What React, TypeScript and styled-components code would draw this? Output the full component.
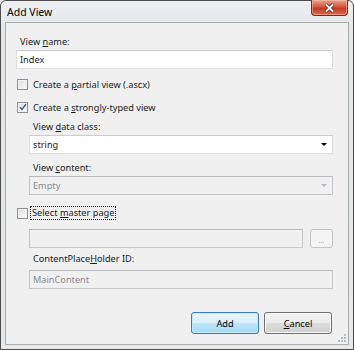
import React from "react";
import styled, { createGlobalStyle } from "styled-components";

const GlobalStyle = createGlobalStyle`
  html, body {
    margin: 0;
    padding: 0;
    background: #ffffff;
  }
  body {
    font-family: "Noto Sans", "Liberation Sans", sans-serif;
    font-size: 9.2px;
    color: #1b1b1b;
  }
`;

const Window = styled.div`
  width: 354px;
  height: 350px;
  box-sizing: border-box;
  display: flex;
  flex-direction: column;
  border: 1px solid #4d4d4d;
  border-radius: 6px 6px 0 0;
  padding: 0 4px 4px 4px;
  background: linear-gradient(180deg, #eef0f2 0%, #e3e6ea 30px, #e6e8eb 100%);
`;

const TitleBar = styled.div`
  height: 21px;
  display: flex;
  align-items: flex-start;
  justify-content: space-between;
`;

const Title = styled.span`
  font-size: 10.5px;
  color: #000;
  padding: 4px 0 0 2px;
`;

const CloseButton = styled.div`
  width: 37px;
  height: 16px;
  margin-top: -1px;
  margin-right: 1px;
  box-sizing: border-box;
  border: 1px solid #7d2a1d;
  border-top: none;
  border-radius: 0 0 4px 4px;
  box-shadow: inset 0 0 0 1px rgba(255, 200, 180, 0.5);
  background: linear-gradient(180deg, #e8a390 0%, #d4583f 45%, #c23b22 55%, #d66b50 100%);
  display: flex;
  align-items: center;
  justify-content: center;
`;

const Client = styled.div`
  flex: 1;
  display: flex;
  flex-direction: column;
  border: 1px solid #a9abae;
  background: #f0f0f0;
  padding: 12px 15px 0 10px;
  position: relative;
`;

const Label = styled.div<{ $mt?: number; $indent?: number }>`
  height: 14px;
  line-height: 14px;
  margin-top: ${(p) => p.$mt ?? 0}px;
  padding-left: ${(p) => (p.$indent ?? 0) + 4}px;
  white-space: nowrap;
`;

const Key = styled.span`
  text-decoration: underline;
  text-underline-offset: 1px;
`;

const TextBox = styled.div<{ $mt?: number; $indent?: number; $disabled?: boolean; $grow?: boolean }>`
  height: 19px;
  box-sizing: border-box;
  margin-top: ${(p) => p.$mt ?? 0}px;
  margin-left: ${(p) => p.$indent ?? 0}px;
  border: 1px solid ${(p) => (p.$disabled ? "#c3c5c8" : "#dcdfe3")};
  border-top-color: ${(p) => (p.$disabled ? "#b9bbbe" : "#c9cdd2")};
  background: ${(p) => (p.$disabled ? "#f0f0f0" : "#ffffff")};
  color: ${(p) => (p.$disabled ? "#8a8a8a" : "#1b1b1b")};
  padding: 0 3px;
  line-height: 17px;
  display: flex;
  align-items: center;
  justify-content: space-between;
  flex: ${(p) => (p.$grow ? 1 : "none")};
`;

const Arrow = styled.span<{ $disabled?: boolean }>`
  width: 0;
  height: 0;
  margin-right: 2px;
  border-left: 3px solid transparent;
  border-right: 3px solid transparent;
  border-top: 3px solid ${(p) => (p.$disabled ? "#b5b5b5" : "#000")};
`;

const CheckRow = styled.label<{ $mt?: number }>`
  display: flex;
  align-items: center;
  gap: 5px;
  height: 14px;
  margin-top: ${(p) => p.$mt ?? 0}px;
  padding-left: 1px;
  white-space: nowrap;
`;

const Box = styled.span`
  width: 11px;
  height: 11px;
  box-sizing: border-box;
  border: 1px solid #8e8f8f;
  background: linear-gradient(135deg, #dcdcdc 0%, #f0f0f0 60%, #fbfbfb 100%);
  box-shadow: inset 0 0 0 1px #f4f4f4;
  display: flex;
  align-items: center;
  justify-content: center;
`;

const Focus = styled.span`
  outline: 1px dotted #222;
  padding: 0 1px;
  margin-left: -2px;
  line-height: 12px;
`;

const Row = styled.div<{ $mt?: number; $indent?: number }>`
  display: flex;
  gap: 7px;
  margin-top: ${(p) => p.$mt ?? 0}px;
  margin-left: ${(p) => p.$indent ?? 0}px;
`;

const SmallButton = styled.div`
  width: 23px;
  height: 19px;
  box-sizing: border-box;
  border: 1px solid #c2c4c7;
  border-radius: 3px;
  background: #f4f4f4;
  color: #a0a0a0;
  font-size: 7px;
  display: flex;
  align-items: center;
  justify-content: center;
  padding-top: 3px;
`;

const Buttons = styled.div`
  display: flex;
  justify-content: flex-end;
  gap: 5px;
  margin-top: 23px;
  margin-right: 1px;
`;

const Button = styled.div<{ $default?: boolean }>`
  width: 68px;
  height: 22px;
  box-sizing: border-box;
  border-radius: 3px;
  border: 1px solid ${(p) => (p.$default ? "#3c7fb1" : "#707070")};
  box-shadow: inset 0 0 0 1px ${(p) => (p.$default ? "#c2e8fc" : "#fbfbfb")};
  background: ${(p) =>
    p.$default
      ? "linear-gradient(180deg, #eaf6fd 0%, #d9f0fc 50%, #bee6fd 51%, #a7d9f5 100%)"
      : "linear-gradient(180deg, #f2f2f2 0%, #ebebeb 50%, #dddddd 51%, #cfcfcf 100%)"};
  display: flex;
  align-items: center;
  justify-content: center;
  color: #000;
`;

const Grip = styled.svg`
  position: absolute;
  right: 1px;
  bottom: 1px;
`;

export default function App() {
  return (
    <>
      <GlobalStyle />
      <Window>
        <TitleBar>
          <Title>Add View</Title>
          <CloseButton>
            <svg width="11" height="10" viewBox="0 0 11 10">
              <path d="M2 1.5 L9 8.5 M9 1.5 L2 8.5" stroke="#5a1a10" strokeWidth="3.2" />
              <path d="M2 1.5 L9 8.5 M9 1.5 L2 8.5" stroke="#ffffff" strokeWidth="1.8" />
            </svg>
          </CloseButton>
        </TitleBar>
        <Client>
          <Label>
            View <Key>n</Key>ame:
          </Label>
          <TextBox $mt={1}>Index</TextBox>

          <CheckRow $mt={8}>
            <Box />
            <span>
              Create a <Key>p</Key>artial view (.ascx)
            </span>
          </CheckRow>
          <CheckRow $mt={9}>
            <Box>
              <svg width="8" height="8" viewBox="0 0 8 8">
                <path d="M1 4.2 L3 6.5 L7 1" fill="none" stroke="#3d5a8c" strokeWidth="1.4" />
              </svg>
            </Box>
            <span>
              Create a <Key>s</Key>trongly-typed view
            </span>
          </CheckRow>

          <Label $mt={6} $indent={13}>
            View <Key>d</Key>ata class:
          </Label>
          <TextBox $mt={1} $indent={13}>
            <span>string</span>
            <Arrow />
          </TextBox>
          <Label $mt={7} $indent={13}>
            View <Key>c</Key>ontent:
          </Label>
          <TextBox $mt={1} $indent={13} $disabled>
            <span>Empty</span>
            <Arrow $disabled />
          </TextBox>

          <CheckRow $mt={11}>
            <Box />
            <Focus>
              Select <Key>m</Key>aster page
            </Focus>
          </CheckRow>
          <Row $mt={9} $indent={13}>
            <TextBox $disabled $grow />
            <SmallButton>...</SmallButton>
          </Row>
          <Label $mt={4} $indent={13}>
            ContentPlace<Key>H</Key>older ID:
          </Label>
          <TextBox $mt={4} $indent={13} $disabled>
            MainContent
          </TextBox>

          <Buttons>
            <Button $default>Add</Button>
            <Button>
              <span>
                <Key>C</Key>ancel
              </span>
            </Button>
          </Buttons>
          <Grip width="10" height="10" viewBox="0 0 10 10">
            <g fill="#b9b9b9">
              <rect x="7" y="1" width="2" height="2" />
              <rect x="4" y="4" width="2" height="2" />
              <rect x="7" y="4" width="2" height="2" />
              <rect x="1" y="7" width="2" height="2" />
              <rect x="4" y="7" width="2" height="2" />
              <rect x="7" y="7" width="2" height="2" />
            </g>
          </Grip>
        </Client>
      </Window>
    </>
  );
}
